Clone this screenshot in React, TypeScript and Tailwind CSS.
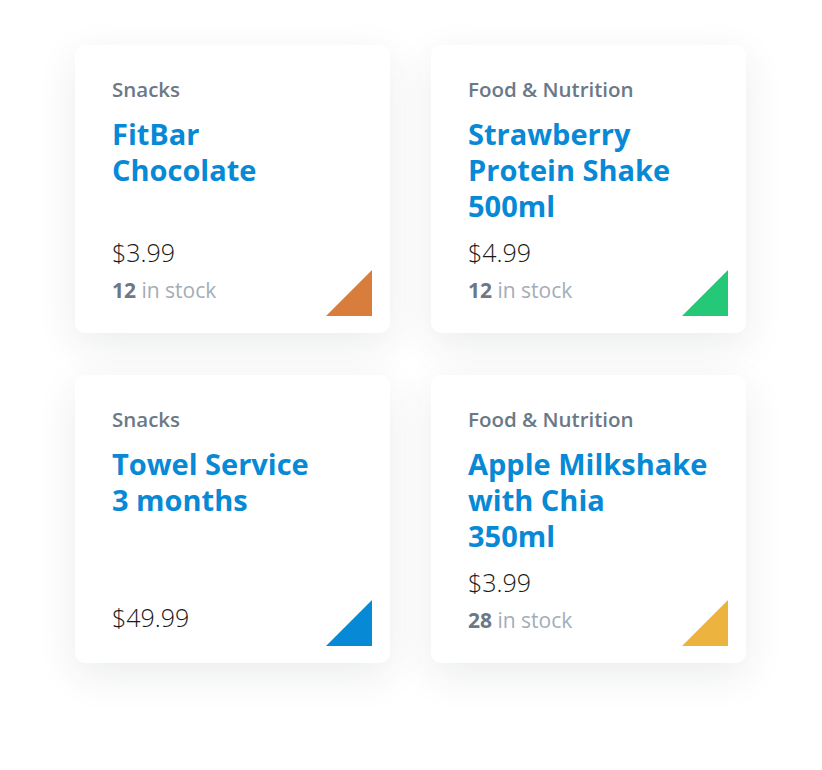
type Product = {
  id: number;
  category: string;
  title: string[];
  price: string;
  stock?: number;
  color: string;
};

const products: Product[] = [
  {
    id: 1,
    category: "Snacks",
    title: ["FitBar", "Chocolate"],
    price: "$3.99",
    stock: 12,
    color: "#d97d3c",
  },
  {
    id: 2,
    category: "Food & Nutrition",
    title: ["Strawberry", "Protein Shake", "500ml"],
    price: "$4.99",
    stock: 12,
    color: "#24c877",
  },
  {
    id: 3,
    category: "Snacks",
    title: ["Towel Service", "3 months"],
    price: "$49.99",
    color: "#0789d6",
  },
  {
    id: 4,
    category: "Food & Nutrition",
    title: ["Apple Milkshake", "with Chia", "350ml"],
    price: "$3.99",
    stock: 28,
    color: "#ecb43f",
  },
];

function Corner({ color }: { color: string }) {
  return (
    <svg
      width="46"
      height="46"
      viewBox="0 0 46 46"
      className="absolute bottom-[17px] right-[18px]"
    >
      <polygon points="46,0 46,46 0,46" fill={color} />
    </svg>
  );
}

function ProductCard({ p }: { p: Product }) {
  return (
    <div className="relative flex h-[288px] flex-col rounded-[10px] bg-white px-[37px] pt-[30px] pb-[29px] shadow-[0_12px_40px_rgba(30,40,60,0.09)]">
      <div className="text-[20.5px] leading-[28px] font-semibold text-[#6b7886]">
        {p.category}
      </div>
      <div className="mt-[13px] text-[29px] leading-[36px] font-bold whitespace-nowrap text-[#0789d6]">
        {p.title.map((line, i) => (
          <div key={i}>{line}</div>
        ))}
      </div>
      <div className="mt-auto">
        <div className="text-[25px] leading-[34px] font-light text-[#1a1a1a]">
          {p.price}
        </div>
        {p.stock !== undefined && (
          <div className="mt-[7px] text-[21px] leading-[28px] text-[#a3adb8]">
            <span className="font-bold text-[#6b7886]">{p.stock}</span> in stock
          </div>
        )}
      </div>
      <Corner color={p.color} />
    </div>
  );
}

export default function App() {
  return (
    <div
      className="min-h-[770px] w-[822px] bg-white pt-[45px] pl-[75px]"
      style={{ fontFamily: '"Open Sans", "Noto Sans", sans-serif' }}
    >
      <div className="grid w-[671px] grid-cols-2 gap-x-[41px] gap-y-[42px]">
        {products.map((p) => (
          <ProductCard key={p.id} p={p} />
        ))}
      </div>
    </div>
  );
}
